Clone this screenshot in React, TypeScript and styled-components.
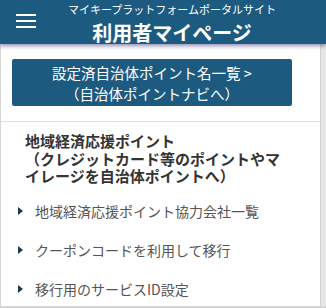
import styled, { createGlobalStyle } from "styled-components";

const GlobalStyle = createGlobalStyle`
  html, body {
    margin: 0;
    padding: 0;
    background: #ffffff;
  }
  body {
    font-family: "Noto Sans CJK JP", "Noto Sans", sans-serif;
  }
`;

const Page = styled.div`
  width: 326px;
  height: 308px;
  box-sizing: border-box;
  display: flex;
  flex-direction: column;
  overflow: hidden;
`;

const Header = styled.header`
  position: relative;
  z-index: 1;
  height: 44px;
  flex-shrink: 0;
  display: grid;
  grid-template-columns: 52px 1fr 34px;
  align-items: center;
  background: #1d5a7f;
  box-shadow: 0 2px 4px rgba(60, 50, 120, 0.55);
`;

const MenuButton = styled.div`
  display: flex;
  flex-direction: column;
  gap: 4px;
  padding-left: 16px;
  margin-top: -3px;
`;

const MenuBar = styled.span`
  display: block;
  width: 20px;
  height: 2px;
  background: #ffffff;
`;

const TitleBlock = styled.div`
  align-self: start;
  display: flex;
  flex-direction: column;
  align-items: center;
  padding-top: 3px;
  color: #ffffff;
`;

const SiteName = styled.div`
  font-size: 11px;
  line-height: 13px;
`;

const PageTitle = styled.div`
  font-size: 20px;
  line-height: 22px;
  font-weight: 700;
  margin-top: 6px;
`;

const Body = styled.div`
  flex: 1;
  display: flex;
  border-left: 1px solid #d6d6d6;
  border-bottom: 2px solid #d6d6d6;
  min-height: 0;
`;

const Content = styled.main`
  flex: 1;
  display: flex;
  flex-direction: column;
  background: #ffffff;
`;

const ScrollTrack = styled.div`
  width: 5px;
  background: #e6e6e6;
  border-left: 1px solid #d2d2d2;
`;

const NaviSection = styled.div`
  padding: 15px 28px 15px 11px;
  border-bottom: 1px solid #dddddd;
`;

const NaviButton = styled.a`
  display: flex;
  flex-direction: column;
  align-items: center;
  justify-content: center;
  height: 47px;
  background: #1d5a7f;
  border-radius: 2px;
  color: #ffffff;
  font-size: 14.5px;
  line-height: 21px;
  text-decoration: none;
`;

const Section = styled.section`
  padding: 10px 0 0 24px;
`;

const SectionTitle = styled.h2`
  margin: 0;
  width: 266px;
  font-size: 15px;
  line-height: 17.5px;
  font-weight: 700;
  color: #333333;
`;

const TitleLine = styled.span`
  display: block;
`;

const LinkList = styled.ul`
  list-style: none;
  margin: 0;
  padding: 17px 0 0 17px;
  display: flex;
  flex-direction: column;
  gap: 21px;
`;

const LinkItem = styled.li`
  display: flex;
  align-items: center;
  gap: 12px;
  height: 18px;
  font-size: 14px;
  color: #555555;
`;

const Arrow = styled.span`
  width: 0;
  height: 0;
  border-top: 4.5px solid transparent;
  border-bottom: 4.5px solid transparent;
  border-left: 5px solid #1a3a4f;
`;

const links = [
  "地域経済応援ポイント協力会社一覧",
  "クーポンコードを利用して移行",
  "移行用のサービスID設定",
];

export default function App() {
  return (
    <>
      <GlobalStyle />
      <Page>
        <Header>
          <MenuButton>
            <MenuBar />
            <MenuBar />
            <MenuBar />
          </MenuButton>
          <TitleBlock>
            <SiteName>マイキープラットフォームポータルサイト</SiteName>
            <PageTitle>利用者マイページ</PageTitle>
          </TitleBlock>
          <div />
        </Header>
        <Body>
          <Content>
            <NaviSection>
              <NaviButton href="#">
                <span>設定済自治体ポイント名一覧&nbsp;&gt;</span>
                <span>（自治体ポイントナビへ）</span>
              </NaviButton>
            </NaviSection>
            <Section>
              <SectionTitle>
                <TitleLine>地域経済応援ポイント</TitleLine>
                <TitleLine>
                  （クレジットカード等のポイントやマイレージを自治体ポイントへ）
                </TitleLine>
              </SectionTitle>
            </Section>
            <LinkList>
              {links.map((l) => (
                <LinkItem key={l}>
                  <Arrow />
                  {l}
                </LinkItem>
              ))}
            </LinkList>
          </Content>
          <ScrollTrack />
        </Body>
      </Page>
    </>
  );
}
